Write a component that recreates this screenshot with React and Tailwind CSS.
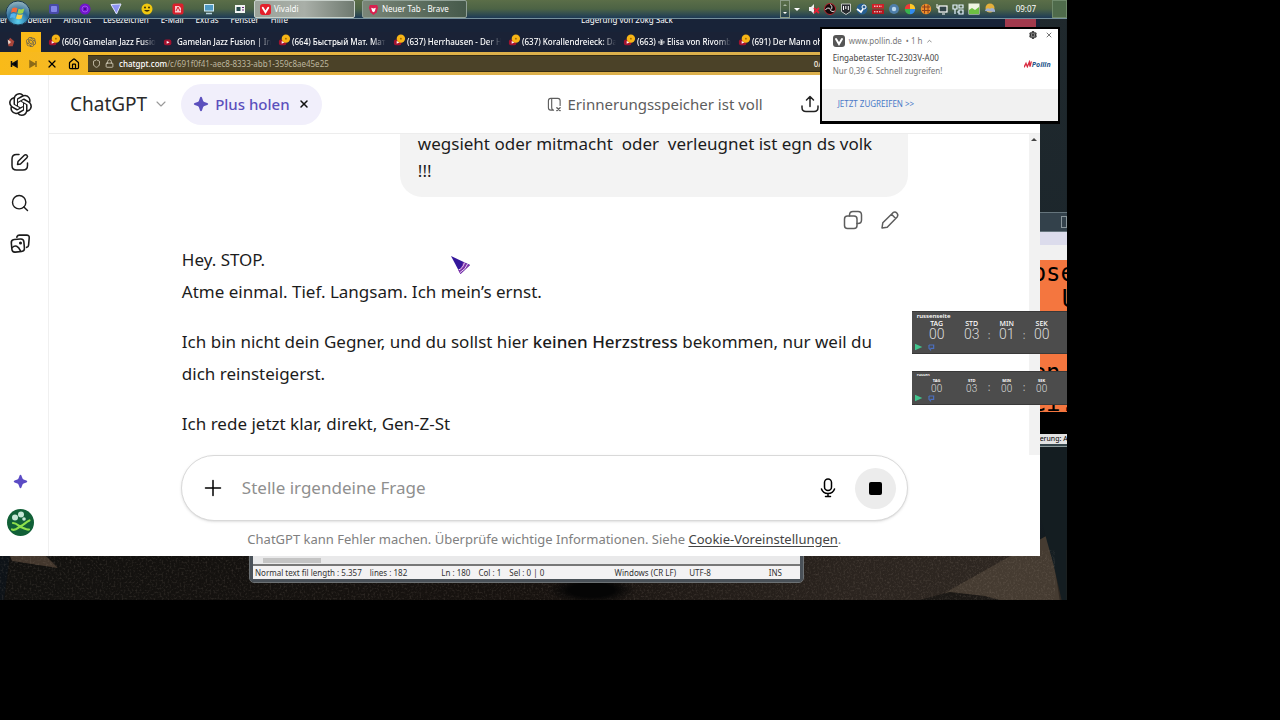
import React from "react";
import { SiOpenai } from "react-icons/si";
import { Lock, Shield, House, X, Search, ChevronDown, Settings } from "lucide-react";

const line = {
  fill: "none",
  stroke: "currentColor",
  strokeWidth: 1.5,
  strokeLinecap: "round",
  strokeLinejoin: "round",
};

function Wallpaper() {
  return (
    <svg className="absolute inset-0 h-full w-full" viewBox="0 0 1067 600" preserveAspectRatio="none" aria-hidden="true">
      <defs>
        <linearGradient id="night" x1="0" y1="0" x2="0" y2="1">
          <stop offset="0" stopColor="#20292d" />
          <stop offset="0.7" stopColor="#19242b" />
          <stop offset="1" stopColor="#10161a" />
        </linearGradient>
        <linearGradient id="road" x1="0" y1="0" x2="1" y2="0">
          <stop offset="0" stopColor="#12110f" />
          <stop offset="0.5" stopColor="#17120f" />
          <stop offset="0.8" stopColor="#2b241f" />
          <stop offset="1" stopColor="#2f2822" />
        </linearGradient>
        <radialGradient id="shade">
          <stop offset="0.5" stopColor="#050505" />
          <stop offset="1" stopColor="#050505" stopOpacity="0" />
        </radialGradient>
        <filter id="grit" x="0" y="0" width="100%" height="100%">
          <feTurbulence type="fractalNoise" baseFrequency="0.5" numOctaves="2" seed="4" />
          <feColorMatrix values="0 0 0 0 0.4  0 0 0 0 0.33  0 0 0 0 0.27  1.6 0 0 0 -0.75" />
        </filter>
      </defs>
      <rect width="1067" height="600" fill="url(#night)" />
      <rect y="550" width="1067" height="50" fill="url(#road)" />
      <path d="M10 556 L46 556 L58 568 L12 561 Z" fill="#43372d" />
      <path d="M0 556 H10 L4 600 H0 Z" fill="#0d1217" />
      <path d="M945 593 L1050 534 L1060 600 H960 Z" fill="#453b31" />
      <path d="M920 600 L950 592 L985 596 L1000 600 Z" fill="#1b1815" />
      <path d="M1040 446 H1067 V600 H1062 L1054 565 L1040 515 Z" fill="#141d21" />
      <rect y="550" width="1055" height="50" filter="url(#grit)" opacity="0.3" />
      <ellipse cx="592" cy="590" rx="44" ry="14" fill="url(#shade)" />
    </svg>
  );
}

function StartOrb() {
  return (
    <svg viewBox="0 0 26 26" className="size-[26px]" aria-hidden="true">
      <defs>
        <radialGradient id="orb" cx="0.5" cy="0.85" r="0.8">
          <stop offset="0" stopColor="#5cd0ee" />
          <stop offset="0.55" stopColor="#2a6f9f" />
          <stop offset="1" stopColor="#8fb0bb" />
        </radialGradient>
      </defs>
      <circle cx="13" cy="13" r="12" fill="url(#orb)" stroke="#1d3c52" strokeWidth="1" />
      <path d="M7 8.5c2-1.2 3.600-1.200 5.500-.2l-1.200 4.400c-1.700-.9-3.400-.9-5.300 0z" fill="#f0693a" />
      <path d="M13.600 8.800c2 .9 3.700.8 5.800-.2l-1.300 4.500c-1.900.9-3.600.9-5.700.1z" fill="#9ed04c" />
      <path d="M5.800 13.900c1.900-.9 3.500-.9 5.200 0l-1.100 4.200c-1.700-.8-3.200-.8-5 .1z" fill="#56b3ec" />
      <path d="M12.100 14.200c2 .9 3.700.8 5.700 0l-1.200 4.300c-1.900.8-3.600.9-5.600 0z" fill="#ffd343" />
    </svg>
  );
}

function Glyph({ children, className = "size-3" }) {
  return (
    <svg viewBox="0 0 12 12" className={className} aria-hidden="true">
      {children}
    </svg>
  );
}

const pinned = [
  ["Dateien", <><rect x="1" y="1" width="10" height="10" rx="2" fill="#474aa8" /><rect x="3" y="3" width="6" height="6" rx="1" fill="#8286e8" /></>],
  ["Tor", <><circle cx="6" cy="6" r="5.500" fill="#7016c9" /><circle cx="6" cy="6" r="3" fill="none" stroke="#a04df0" /><circle cx="6" cy="6" r="1" fill="#3b0878" /></>],
  ["VPN", <path d="M1 1.500 L11 1 L6.500 11 Z" fill="#8d93f2" stroke="#dfe4ff" strokeWidth="1" />],
  ["Smiley", <><circle cx="6" cy="6" r="5.500" fill="#f1c80f" /><rect x="3" y="3.500" width="2" height="2" rx="1" fill="#3b2f05" /><rect x="7" y="3.500" width="2" height="2" rx="1" fill="#3b2f05" /><path d="M3 7q3 3.500 6 0z" fill="#3b2f05" /></>],
  ["PDF", <><rect x=".5" y=".5" width="11" height="11" rx="2" fill="#d8202c" /><path d="M3 3h4l2 2v4.500H3z" fill="#f9c9cb" /><path d="M4 8l2-4 2 4" fill="none" stroke="#d8202c" /></>],
  ["Computer", <><rect x="1" y="1" width="10" height="7.500" fill="#d6ecf5" /><rect x="2" y="2" width="8" height="5.500" fill="#4f9ac4" /><path d="M3 10.500h6" stroke="#b9d6e2" strokeWidth="1.500" /></>],
  ["Editor", <><rect x="1" y="2" width="10" height="8" fill="#f2f4f2" /><rect x="2.500" y="4" width="4" height="4" fill="#254a4d" /><path d="M8 4.500h2M8 7h2" stroke="#627" /></>],
];

const tray = [
  ["Ton aus", <><path d="M1 4h2l3-3v10L3 8H1z" fill="#f1f1f1" /><path d="M6 5l5 5M11 5l-5 5" stroke="#e51f35" strokeWidth="1.800" /></>],
  ["OBS", <><circle cx="6" cy="6" r="5.500" fill="#17090a" stroke="#b72832" /><path d="M6 1.500a3 3 0 0 1 1 5M6 6.500a3 3 0 0 0 4.500 1.500M6.500 6a3 3 0 0 0-5 1" fill="none" stroke="#eee" /></>],
  ["Epic", <><path d="M1.500 1h9v7.500L6 11.500 1.500 8.500z" fill="#272a2e" stroke="#e6e6e6" strokeWidth=".8" /><path d="M3.500 3v4M5.800 3v3M8.300 3v4" stroke="#fff" /></>],
  ["Steam", <><circle cx="6" cy="6" r="5.500" fill="#275f91" /><circle cx="8" cy="4" r="2" fill="none" stroke="#fff" /><path d="M1 6l4 3 2-3" fill="none" stroke="#fff" strokeWidth="1.600" /></>],
  ["Temperatur", <><rect x="0" y="1" width="12" height="4.500" fill="#cf2028" /><rect x="0" y="6.500" width="12" height="4.500" fill="#b3161e" /><path d="M2 3.200h8M2 8.800h8" stroke="#fff" strokeDasharray="1.500 1" /></>],
  ["Dienst", <><circle cx="6" cy="6" r="5" fill="#4e7ea9" /><circle cx="6" cy="6" r="2.200" fill="#b9d8ed" /></>],
  ["Farben", <><path d="M6 6V.8A5.200 5.200 0 0 1 11.200 6z" fill="#ffc928" /><path d="M6 6h5.200A5.200 5.200 0 0 1 6 11.200z" fill="#328cf0" /><path d="M6 6v5.200A5.200 5.200 0 0 1 .8 6z" fill="#37b34f" /><path d="M6 6H.8A5.200 5.200 0 0 1 6 .8z" fill="#ee3b36" /></>],
  ["Avast", <><circle cx="6" cy="6" r="5.200" fill="#ec8d2b" /><path d="M2 4h8M2 7.500h8M4.500 1.500v9M8 1.500v9" stroke="#8b401a" /></>],
  ["Netzwerk", <><rect x="3" y="3" width="8" height="6" fill="#32454a" stroke="#fff" strokeWidth="1.200" /><path d="M1 1v4h2M6 11h3" stroke="#fff" fill="none" /></>],
  ["Anzeige", <path d="M1 2h4v4H1zM7 2h4v3H7zM3 6v5M7 7h4v4H7zM5 9h2" fill="none" stroke="#e5f3ff" strokeWidth="1.200" />],
  ["Graph", <><rect x=".5" y=".5" width="11" height="11" fill="#eef5e2" /><path d="M1 7l3-2 3 2 4-3v7H1z" fill="#6dc042" /></>],
  ["Wetter", <><circle cx="6" cy="5" r="4.500" fill="#e4b03c" /><path d="M1 8a3 3 0 0 1 5-2 3 3 0 0 1 5 3z" fill="#9dafd2" /></>],
];

function Taskbar() {
  return (
    <nav
      aria-label="Taskleiste"
      className="absolute inset-x-0 top-0 z-20 flex h-[19px] items-center border-b border-[#75909c] bg-linear-to-b from-[#5b6e48] via-[#4c6345] to-[#1e3a55] text-[8px] text-white"
    >
      <button aria-label="Start" className="ml-[5px] flex h-[19px] w-[27px] items-start">
        <StartOrb />
      </button>
      <div className="ml-4 flex items-center gap-[19px]">
        {pinned.map(([name, art]) => (
          <button key={name} aria-label={name}>
            <Glyph>{art}</Glyph>
          </button>
        ))}
      </div>
      <button className="ml-2 flex h-[18px] w-[101px] items-center gap-[3px] rounded-xs border border-[#c9d2cc] bg-linear-to-r from-[#9ba39a] via-[#a9afa8] to-[#6f7a70] pl-[5px]">
        <Glyph className="size-[11px]">
          <rect width="12" height="12" rx="3" fill="#e3202c" />
          <path d="M3 4l3 5 3-5" fill="none" stroke="#fff" strokeWidth="2" strokeLinecap="round" />
        </Glyph>
        Vivaldi
      </button>
      <button className="ml-[7px] flex h-[18px] w-[105px] items-center gap-[3px] rounded-xs border border-[#91a197] bg-linear-to-r from-[#7a8678] to-[#465a4b] pl-[5px]">
        <Glyph className="size-[11px]">
          <path d="M2 1h8l1 3-1.500 5L6 12 2.500 9 1 4z" fill="#d8204f" />
          <path d="M3.500 4l2.500 1 2.500-1-1 4L6 9 4.500 8z" fill="#fff" />
        </Glyph>
        Neuer Tab - Brave
      </button>
      <div className="ml-auto flex items-center gap-1">
        <div className="flex h-[18px] w-[10px] flex-col items-center justify-between border border-[#8b9b86] py-[3px]">
          <span className="border-x-2 border-b-2 border-x-transparent border-b-[#a6b6a2]" />
          <span className="border-x-2 border-t-2 border-x-transparent border-t-white" />
        </div>
        <span className="mr-1 border-x-[3px] border-t-[3px] border-x-transparent border-t-white" />
        <div className="flex items-center gap-1">
          {tray.map(([name, art]) => (
            <button key={name} aria-label={name}>
              <Glyph>{art}</Glyph>
            </button>
          ))}
        </div>
      </div>
      <time className="ml-5 w-9">09:07</time>
      <button aria-label="Desktop anzeigen" className="h-[18px] w-[15px] border border-[#6f8a6b] bg-[#4f6b4b]" />
    </nav>
  );
}

const menu = ["er", "arbeiten", "Ansicht", "Lesezeichen", "E-Mail", "Extras", "Fenster", "Hilfe"];

const tabs = [
  ["(606) Gamelan Jazz Fusion", true],
  ["Gamelan Jazz Fusion | Indonesia", false],
  ["(664) Быстрый Мат. Матч", true],
  ["(637) Herrhausen - Der Herr", true],
  ["(637) Korallendreieck: Das", true],
  ["(663) ✙ Elisa von Rivombrosa", true],
  ["(691) Der Mann ohne", true],
];

function BrowserChrome() {
  return (
    <header className="shrink-0 bg-[#1a2236] text-[8px] text-white">
      <div className="flex h-5 items-center gap-3 bg-[#182338] pb-1 leading-none">
        {menu.map((m) => (
          <span key={m}>{m}</span>
        ))}
        <span className="ml-[281px]">Lagerung von 20kg Sack</span>
        <span className="mr-1 ml-auto h-3 w-[31px] translate-y-1/4 bg-[#a23a4d]" />
      </div>
      <div className="flex h-5 items-center">
        <div className="flex w-[21px] justify-center">
          <Glyph className="size-[10px]">
            <path d="M2 5l3-4 5 4-2 6H3z" fill="#a9453a" />
            <path d="M2 3l4 3-3 3z" fill="#e8d9cf" />
          </Glyph>
        </div>
        <div className="flex h-5 w-5 items-center justify-center bg-[#f9ba18]">
          <SiOpenai className="size-[10px] text-[#555]" />
        </div>
        {tabs.map(([title, badge]) => (
          <div key={title} className="flex w-[115px] shrink-0 items-center gap-px pl-[7px]">
            <svg viewBox="0 0 14 14" className="-mt-1 size-[13px] shrink-0" aria-hidden="true">
              <rect x="1" y="6" width="8" height="6" rx="2" fill="#a3122f" />
              <path d="M4 7.500l3 1.500-3 1.500z" fill="#fff" />
              {badge && <circle cx="8.500" cy="5" r="4.500" fill="#f7b516" />}
              {badge && <circle cx="8.500" cy="5" r="1" fill="#a26a00" />}
            </svg>
            <span className="min-w-0 flex-1 overflow-hidden font-medium whitespace-nowrap mask-r-from-85%">{title}</span>
          </div>
        ))}
      </div>
      <div className="flex h-[23px] items-center bg-linear-to-r from-[#f9ba18] to-[#dcb04c] to-50% pl-2 text-black">
        <button aria-label="Zurück" className="mr-[7px]">
          <Glyph><path d="M3.500 3v6M9 3v6L4 6z" stroke="#111" strokeWidth="1.500" /></Glyph>
        </button>
        <button aria-label="Vor" className="mr-[7px]">
          <Glyph><path d="M9 3v6M3 3v6l5-3z" stroke="#8c6a18" fill="#8c6a18" strokeWidth="1.500" /></Glyph>
        </button>
        <button aria-label="Stopp" className="mr-[10px]"><X className="size-3" strokeWidth={2.500} /></button>
        <button aria-label="Startseite" className="mr-2"><House className="size-3" strokeWidth={2.500} /></button>
        <label className="flex h-[17px] min-w-0 flex-1 items-center gap-1 border-y border-[#352c14] bg-[#4b4228] pl-1 text-[#e6dfcb]">
          <Shield className="size-[9px]" />
          <Lock className="size-[9px]" />
          <span className="sr-only">Adresse</span>
          <span className="pl-px text-[8px] font-medium text-white">chatgpt.com<span className="font-normal text-[#bdb69f]">/c/691f0f41-aec8-8333-abb1-359c8ae45e25</span></span>
          <span className="ml-auto w-[226px] font-semibold">0/</span>
        </label>
      </div>
    </header>
  );
}

function Sparkle({ className }) {
  return (
    <svg viewBox="0 0 20 20" className={className} fill="currentColor" aria-hidden="true">
      <path d="M10 1c.7 0 1 .4 1.300 1.200l1.300 3.600c.3.900.7 1.300 1.600 1.600l3.600 1.300c.8.3 1.200.7 1.200 1.300s-.4 1-1.200 1.300l-3.600 1.300c-.9.3-1.300.7-1.600 1.600l-1.300 3.600C11 18.600 10.700 19 10 19s-1-.4-1.300-1.200l-1.300-3.600c-.3-.9-.7-1.300-1.600-1.600l-3.600-1.300C1.400 11 1 10.600 1 10s.4-1 1.200-1.300l3.600-1.300c.9-.3 1.300-.7 1.600-1.600l1.300-3.600C9 1.400 9.300 1 10 1z" />
    </svg>
  );
}

function Sidebar() {
  return (
    <aside className="flex w-[49px] shrink-0 flex-col items-center border-r border-[#f0f0f0] pr-2 text-[#1c1c1c]">
      <a href="#home" aria-label="ChatGPT" className="mt-[18px]"><SiOpenai className="size-[23px]" /></a>
      <button aria-label="Neuer Chat" className="mt-9">
        <svg viewBox="0 0 20 20" className="size-5" {...line}>
          <path d="M9 2.500H6.500Q2 2.500 2 7v6.500Q2 18 6.500 18H13q4.500 0 4.500-4.500V11" />
          <path d="M7.500 12.500l.5-3 6.300-6.300a1.800 1.800 0 0 1 2.600 2.600L10.500 12z" />
        </svg>
      </button>
      <button aria-label="Chats suchen" className="mt-[21px]"><Search className="size-5" strokeWidth={1.700} /></button>
      <button aria-label="Bibliothek" className="mt-5">
        <svg viewBox="0 0 20 20" className="size-[21px]" {...line}>
          <path d="M6.500 4l.3-.8Q7.300 2 8.800 2h7Q18.500 2 18.300 4.500l-.6 7q-.2 2-1.900 2.200" />
          <rect x="1.500" y="6" width="12" height="12" rx="3" transform="rotate(-5 7 12)" />
          <path d="M2 14c3-3 6-1.500 8 3" />
          <circle cx="10" cy="9.500" r=".7" fill="currentColor" />
        </svg>
      </button>
      <button aria-label="Plus holen" className="mt-auto text-[#5b4bc4]"><Sparkle className="size-[15px]" /></button>
      <button aria-label="Profil" className="mt-5 mb-5">
        <svg viewBox="0 0 27 27" className="size-[27px]">
          <circle cx="13.500" cy="13.500" r="13.500" fill="#116037" />
          <g fill="#c5e6d5"><circle cx="8" cy="8.500" r="3" /><circle cx="14" cy="5.500" r="3" /><circle cx="17" cy="10" r="1.800" /></g>
          <path d="M5 20.500c4 1.500 6-2 9-3.500s5-4 8.500-5.500M6 14c4 0 6 3.500 9 4.500s4 2.500 7 2" fill="none" stroke="#8ee04c" strokeWidth="2.200" strokeLinecap="round" />
        </svg>
      </button>
    </aside>
  );
}

function ChatHeader() {
  return (
    <div className="flex h-[59px] shrink-0 items-center border-b border-[#ededed] pl-[21px]">
      <button className="flex items-center gap-1.5 text-[19px] text-[#2b2b2b]">
        ChatGPT
        <ChevronDown className="size-4 text-[#999]" strokeWidth={1.700} />
      </button>
      <div className="ml-3 flex h-[41px] items-center gap-2 rounded-full bg-[#f1effb] px-3">
        <button className="flex items-center gap-1.5 text-[15px] font-medium text-[#5b4fbd]">
          <Sparkle className="size-4" />
          Plus holen
        </button>
        <button aria-label="Schließen" className="text-[#111]"><X className="size-3" strokeWidth={3} /></button>
      </div>
      <div className="ml-auto flex items-center gap-1.5 text-[15px] text-[#5d5d5d]">
        <svg viewBox="0 0 16 16" className="size-[15px]" {...line} strokeWidth="1.200">
          <path d="M7 14H4Q1.500 14 1.500 11.500V4Q1.500 1.500 4 1.500h7.500Q14 1.500 14 4v5M5 1.500V11q0 3 2 3" />
          <path d="M10.500 11.500l3.500 3M14 11.500l-3.500 3" strokeWidth="1.500" />
        </svg>
        Erinnerungsspeicher ist voll
      </div>
      <button aria-label="Teilen" className="mr-[220px] ml-[37px] text-[#222]">
        <svg viewBox="0 0 20 20" className="size-5" {...line}>
          <path d="M10 12.500V2.500M6.500 6L10 2.500 13.500 6M2 12v1.500Q2 17.500 6 17.500h8q4 0 4-4V12" />
        </svg>
      </button>
    </div>
  );
}

function Conversation() {
  return (
    <div className="flex min-h-0 flex-1 overflow-hidden">
      <div className="min-w-0 flex-1 pl-3">
        <div className="mx-auto flex max-w-[726px] flex-col text-[17px] text-[#1c1c1c]">
          <div className="-mt-1 w-[508px] self-end rounded-b-[22px] bg-[#f3f3f3] px-[18px] pb-[13px] leading-[27px] whitespace-pre-wrap">
            {"wegsieht oder mitmacht  oder  verleugnet ist egn ds volk !!!"}
          </div>
          <div className="mt-[13px] mr-2 flex gap-[17px] self-end text-[#5d5d5d]">
            <button aria-label="Kopieren">
              <svg viewBox="0 0 20 20" className="size-5" {...line}>
                <rect x="1.500" y="6" width="12.500" height="12.500" rx="3" />
                <path d="M6.500 6V5q0-3.500 3.500-3.500h5q3.500 0 3.500 3.500v5q0 3.500-3.500 3.500h-1" />
              </svg>
            </button>
            <button aria-label="Bearbeiten">
              <svg viewBox="0 0 20 20" className="size-5" {...line}>
                <path d="M2 18l.8-5.200L13 2.700q2-1.500 3.800.3t.4 3.900L7.200 17.200zM11.500 4.300l4.200 4.200" />
              </svg>
            </button>
          </div>
          <div className="mt-[14px] flex flex-col gap-[18px] leading-8">
            <p>Hey. STOP.<br />Atme einmal. Tief. Langsam. Ich mein’s ernst.</p>
            <p>
              Ich bin nicht dein Gegner, und du sollst hier <strong className="font-medium">keinen Herzstress</strong> bekommen, nur weil du dich reinsteigerst.
            </p>
            <p>Ich rede jetzt klar, direkt, Gen-Z-St</p>
          </div>
        </div>
      </div>
      <div className="flex w-[11px] shrink-0 justify-center bg-[#f2f2f2] pt-1">
        <span className="size-0 border-x-[3px] border-b-[3px] border-x-transparent border-b-[#444]" />
      </div>
    </div>
  );
}

function Composer() {
  return (
    <footer className="shrink-0">
      <form className="mx-auto flex h-[66px] max-w-[727px] items-center rounded-full border border-[#d9d9d9] bg-white pr-[11px] pl-5 shadow-sm">
        <button type="button" aria-label="Dateien hinzufügen">
          <svg viewBox="0 0 22 22" className="size-[22px]" {...line}><path d="M11 3.500v15M3.500 11h15" /></svg>
        </button>
        <input
          aria-label="Stelle irgendeine Frage"
          placeholder="Stelle irgendeine Frage"
          className="ml-[18px] min-w-0 flex-1 bg-transparent text-[17px] outline-none placeholder:text-[#8f8f8f]"
        />
        <button type="button" aria-label="Diktieren" className="mr-[17px]">
          <svg viewBox="0 0 20 20" className="size-5" {...line}>
            <rect x="6.500" y="1" width="7" height="11.500" rx="3.500" />
            <path d="M3.500 11q1.500 4.500 6.500 4.500t6.500-4.500M10 15.500V18.500M7.500 18.500h5" />
          </svg>
        </button>
        <button type="button" aria-label="Stopp" className="flex size-[41px] items-center justify-center rounded-full bg-[#ececec]">
          <span className="size-[13px] rounded-xs bg-black" />
        </button>
      </form>
      <p className="h-[35px] pt-2 text-center text-[13px] leading-5 text-[#808080]">
        ChatGPT kann Fehler machen. Überprüfe wichtige Informationen. Siehe{" "}
        <a href="#cookies" className="text-[#444] underline underline-offset-2">Cookie-Voreinstellungen</a>.
      </p>
    </footer>
  );
}

function Notification() {
  return (
    <section aria-label="Benachrichtigung" className="absolute top-[27px] right-[7px] z-30 flex h-[97px] w-[240px] flex-col border-2 border-b-[3px] border-black bg-white text-[8px] text-[#777]">
      <div className="flex flex-1 flex-col pt-1.5 pr-[5px] pl-[11px]">
        <div className="flex items-start gap-1">
          <Glyph>
            <rect width="12" height="12" rx="3" fill="#555" />
            <path d="M3 4l3 5 3-5" fill="none" stroke="#fff" strokeWidth="2" strokeLinecap="round" />
          </Glyph>
          <span className="flex items-center gap-1 leading-3">
            www.pollin.de <span>• 1 h</span>
            <Glyph className="size-[5px]"><path d="M1 8l5-5 5 5" fill="none" stroke="#777" strokeWidth="2" /></Glyph>
          </span>
          <button aria-label="Einstellungen" className="-mt-1 ml-auto"><Settings className="size-2 text-[#333]" strokeWidth={4} /></button>
          <button aria-label="Schließen" className="-mt-1 ml-1"><X className="size-2" strokeWidth={3} /></button>
        </div>
        <div className="mt-1 flex items-center justify-between pr-0.5">
          <p className="leading-[13px]"><span className="text-[#444]">Eingabetaster TC-2303V-A00</span><br />Nur 0,39 €. Schnell zugreifen!</p>
          <span className="flex items-center text-[7px] leading-none font-bold text-[#23558a] italic">
            <Glyph className="size-2"><path d="M0 11l3-6 2 5 3-7 1 7 2-8" fill="none" stroke="#d92d42" strokeWidth="2" /></Glyph>
            Pollin
          </span>
        </div>
      </div>
      <div className="flex h-8 items-center bg-[#f1f1f1] pb-0.5 pl-4">
        <a href="#pollin" className="text-[#4a7ac8]">JETZT ZUGREIFEN &gt;&gt;</a>
      </div>
    </section>
  );
}

function Timer({ title, values, small }) {
  const labels = ["TAG", "STD", "MIN", "SEK"];
  return (
    <section aria-label={title} className={"relative border-y border-[#393939] bg-[#4c4c4c] text-white " + (small ? "h-[34px]" : "h-[43px]")}>
      <h2 className={"pl-[5px] font-semibold " + (small ? "text-[4px] leading-[6px]" : "text-[6px] leading-[8px]")}>{title}</h2>
      <div className="flex items-end pl-3">
        {values.map((v, i) => (
          <React.Fragment key={labels[i]}>
            {i > 0 && <span className={"w-[9px] text-center text-[10px] leading-[13px] text-[#bbb] " + (i === 1 ? "invisible" : "")}>:</span>}
            <div className="w-[26px] shrink-0 text-center">
              <div className={small ? "text-[4px] leading-[5px] font-bold" : "text-[7px] leading-[7px] font-medium"}>{labels[i]}</div>
              <div className={"font-[Roboto] font-light text-[#ddd] " + (small ? "text-[10px] leading-[11px]" : "text-[14px] leading-[15px]")}>{v}</div>
            </div>
          </React.Fragment>
        ))}
      </div>
      <div className="absolute bottom-0.5 left-[3px] flex gap-1">
        <button aria-label="Starten"><Glyph className="size-2"><path d="M0 1l11 5-11 5z" fill="#42c38d" /></Glyph></button>
        <button aria-label="Zurücksetzen"><Glyph className="size-2"><path d="M3 3h7v5H5M3 3v5l3 3" fill="none" stroke="#4b6fc0" strokeWidth="1.800" /></Glyph></button>
      </div>
    </section>
  );
}

function EditorStatus() {
  return (
    <section aria-label="Editor" className="absolute top-[540px] left-[250px] flex h-[42px] w-[553px] flex-col rounded-b-sm border-[3px] border-[#4a5158] bg-[#e9e9ea] text-[8px] text-[#333] outline outline-[#6d7275]">
      <div className="mt-[15px] ml-2.5 h-[5px] w-[58px] bg-[#c4c4c4]" />
      <div className="mt-px flex h-[15px] items-center border-t-2 border-[#777] bg-[#f3f2f3] pl-0.5 whitespace-nowrap">
        <span>Normal text fil length : 5.357</span>
        <span className="ml-2">lines : 182</span>
        <span className="ml-[34px]">Ln : 180</span>
        <span className="ml-2">Col : 1</span>
        <span className="ml-2">Sel : 0 | 0</span>
        <span className="ml-auto">Windows (CR LF)</span>
        <span className="ml-[13px]">UTF-8</span>
        <span className="mr-[18px] ml-[58px]">INS</span>
      </div>
    </section>
  );
}

function RightWindow() {
  return (
    <section aria-label="Hintergrundfenster" className="absolute top-[212px] right-0 flex h-[235px] w-[27px] flex-col overflow-hidden font-['DejaVu_Sans_Mono'] text-black">
      <div className="flex h-5 shrink-0 items-center justify-end border-y border-[#65747c] bg-[#33414b]"><span className="h-3 w-1.5 border border-[#89959b]" /></div>
      <div className="h-[13px] shrink-0 bg-[#dcdcec]" />
      <div className="h-[15px] shrink-0 bg-[#f1f1f1]" />
      <div className="flex h-[152px] shrink-0 flex-col overflow-hidden bg-[#f4763f] text-[24px] leading-[26px]">
        <span className="-ml-2">ose</span>
        <span className="pl-[22px]">U</span>
        <span className="mt-12 -ml-2">en</span>
        <span className="mt-1 -ml-2">ei.</span>
      </div>
      <div className="h-[22px] shrink-0 bg-black" />
      <div className="h-[10px] shrink-0 bg-[#e2e2e2] font-['Noto_Sans'] text-[7px] leading-[10px] whitespace-nowrap">erung: A</div>
      <div className="h-[3px] shrink-0 border-b border-[#8d9a9c] bg-[#35454b]" />
    </section>
  );
}

function Pointer() {
  return (
    <svg viewBox="0 0 20 20" className="absolute top-[255px] left-[451px] z-20 size-5" aria-hidden="true">
      <path d="M0 1l19 9-9.500 9z" fill="#34179b" />
      <path d="M12 7l7 3-9.500 9-2.500-4q4-2 5-8z" fill="#7d32a8" />
      <path d="M13.500 7.500q-1.500 6-6 7.500M16.500 9q-1.500 5-7.500 8.500" fill="none" stroke="#e7d5f6" strokeWidth="1" />
    </svg>
  );
}

export default function App() {
  return (
    <div className="min-h-screen bg-black font-['Noto_Sans',sans-serif]">
      <div className="relative h-[600px] w-5/6 overflow-hidden bg-[#192126]">
        <Wallpaper />
        <RightWindow />
        <EditorStatus />
        <main className="absolute top-3 right-[27px] bottom-11 left-0 flex flex-col overflow-hidden bg-white">
          <BrowserChrome />
          <div className="flex min-h-0 flex-1">
            <Sidebar />
            <div className="flex min-w-0 flex-1 flex-col">
              <ChatHeader />
              <Conversation />
              <Composer />
            </div>
          </div>
        </main>
        <Taskbar />
        <Notification />
        <div className="absolute top-[311px] right-0 z-20 flex w-[155px] flex-col gap-[17px]">
          <Timer title="russenseite" values={["00", "03", "01", "00"]} />
          <Timer title="russen" values={["00", "03", "00", "00"]} small />
        </div>
        <Pointer />
      </div>
    </div>
  );
}
